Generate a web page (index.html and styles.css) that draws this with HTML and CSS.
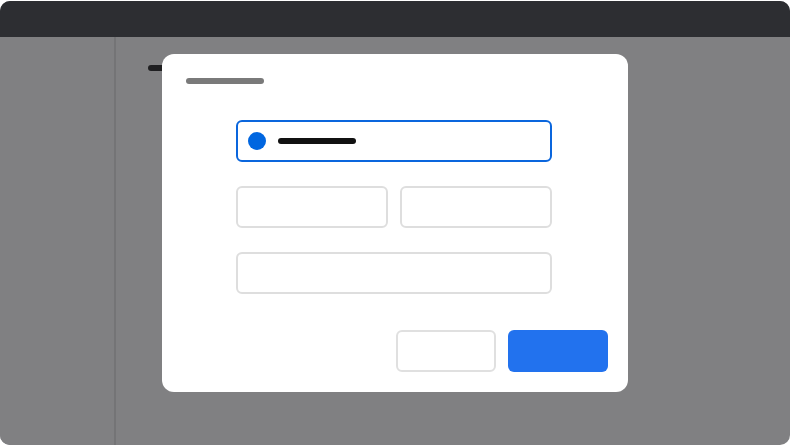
FILE: index.html
```html
<!DOCTYPE html>
<html>
<head>
<meta charset="utf-8">
<link rel="stylesheet" href="styles.css">
</head>
<body>
<div class="window">
  <div class="titlebar"></div>
  <div class="body">
    <aside class="sidebar"></aside>
    <main class="main">
      <div class="page-heading"></div>
    </main>
    <div class="modal">
      <div class="modal-title"></div>
      <div class="form">
        <div class="field focused">
          <span class="dot"></span>
          <span class="value"></span>
        </div>
        <div class="row">
          <div class="field"></div>
          <div class="field"></div>
        </div>
        <div class="field"></div>
      </div>
      <div class="actions">
        <div class="btn secondary"></div>
        <div class="btn primary"></div>
      </div>
    </div>
  </div>
</div>
</body>
</html>
```
FILE: styles.css
```css
html, body {
  margin: 0;
  padding: 0;
  background: #ffffff;
  font-family: "Inter", "Liberation Sans", sans-serif;
}
.window {
  margin-top: 1px;
  width: 790px;
  height: 444px;
  border-radius: 10px;
  overflow: hidden;
  display: flex;
  flex-direction: column;
  background: #808082;
}
.titlebar {
  height: 36px;
  background: #2d2e32;
  flex-shrink: 0;
}
.body {
  position: relative;
  flex: 1;
  display: flex;
}
.sidebar {
  width: 114px;
  border-right: 2px solid #747476;
  background: #808082;
}
.main {
  flex: 1;
  padding: 28px 0 0 32px;
}
.page-heading {
  width: 40px;
  height: 6px;
  border-radius: 3px;
  background: #1f1f21;
}
.modal {
  position: absolute;
  left: 162px;
  top: 17px;
  width: 466px;
  height: 338px;
  box-sizing: border-box;
  background: #ffffff;
  border-radius: 12px;
  padding: 24px 20px 20px 24px;
  display: flex;
  flex-direction: column;
}
.modal-title {
  width: 78px;
  height: 6px;
  border-radius: 3px;
  background: #7a7a7a;
}
.form {
  margin: 36px 0 0 50px;
  width: 316px;
  display: flex;
  flex-direction: column;
  gap: 24px;
}
.row {
  display: flex;
  gap: 12px;
}
.row .field {
  flex: 1;
}
.field {
  height: 42px;
  box-sizing: border-box;
  border: 2px solid #dedede;
  border-radius: 6px;
  background: #fff;
  display: flex;
  align-items: center;
  padding-left: 10px;
}
.field.focused {
  border-color: #0a66dd;
}
.dot {
  width: 18px;
  height: 18px;
  border-radius: 50%;
  background: #0066e0;
}
.value {
  margin-left: 12px;
  width: 78px;
  height: 6px;
  border-radius: 3px;
  background: #111111;
}
.actions {
  margin-top: auto;
  display: flex;
  justify-content: flex-end;
  gap: 12px;
}
.btn {
  width: 100px;
  height: 42px;
  box-sizing: border-box;
  border-radius: 6px;
}
.btn.secondary {
  border: 2px solid #e0e0e0;
  background: #fff;
}
.btn.primary {
  background: #2272ee;
}
```
